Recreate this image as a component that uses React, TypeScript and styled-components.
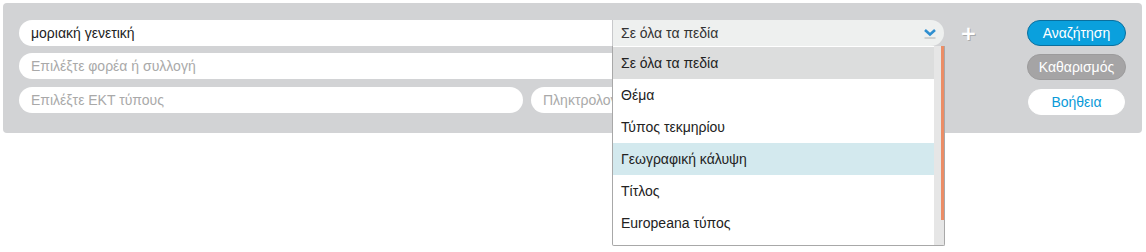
import React from 'react'
import styled, { createGlobalStyle, css } from 'styled-components'

const GlobalStyle = createGlobalStyle`
  html, body {
    margin: 0;
    min-height: 100%;
    background: #ffffff;
    font-family: 'Liberation Sans', Arial, sans-serif;
  }
`

const Page = styled.div`
  padding: 3px;
  min-height: 100vh;
  box-sizing: border-box;
`

const Panel = styled.div`
  width: 1139px;
  height: 130px;
  box-sizing: border-box;
  padding: 17px 16px 0 16px;
  background: #d2d3d5;
  border-radius: 4px;
  display: flex;
  flex-flow: row nowrap;
  align-items: flex-start;
`

const Fields = styled.div`
  width: 925px;
  display: flex;
  flex-flow: column nowrap;
  gap: 7px;
`

const FieldRow = styled.div`
  display: flex;
  flex-flow: row nowrap;
  gap: 8px;
  height: 26px;
  &:last-child {
    margin-top: 1px;
  }
`

const Input = styled.div<{ width?: number; $muted?: boolean; joined?: boolean }>`
  box-sizing: border-box;
  height: 26px;
  flex: ${({ width }) => (width ? `0 0 ${width}px` : '1 1 auto')};
  background: #ffffff;
  border-radius: 13px;
  padding-left: 12px;
  font-size: 14px;
  line-height: 26px;
  color: ${({ $muted }) => ($muted ? '#a9a9a9' : '#222222')};
  white-space: nowrap;
  overflow: hidden;
  ${({ joined }) =>
    joined &&
    css`
      border-radius: 13px 0 0 13px;
    `};
`

const JoinedRow = styled.div`
  display: flex;
  flex-flow: row nowrap;
  height: 26px;
`

const SelectWrap = styled.div`
  position: relative;
  flex: 0 0 332px;
`

const Select = styled.div`
  box-sizing: border-box;
  height: 26px;
  background: #eef0ef;
  border-radius: 0 13px 13px 0;
  border-left: 1px solid #c8c9cb;
  padding-left: 8px;
  font-size: 14px;
  line-height: 27px;
  color: #333333;
  display: flex;
  align-items: center;
  justify-content: space-between;
  padding-right: 7px;
`

const Chevron = styled.svg`
  width: 14px;
  height: 14px;
  margin-top: 1px;
`

const Dropdown = styled.div`
  position: absolute;
  top: 26px;
  left: 0;
  width: 333px;
  height: 200px;
  box-sizing: border-box;
  background: #ffffff;
  border: 1px solid #a8a8a8;
  border-top: none;
  border-radius: 0 0 2px 2px;
  display: flex;
  flex-flow: row nowrap;
  z-index: 5;
`

const OptionList = styled.div`
  flex: 1 1 auto;
  display: flex;
  flex-flow: column nowrap;
  padding-top: 1px;
`

const Option = styled.div<{ tone?: 'selected' | 'hover' }>`
  height: 32px;
  line-height: 32px;
  padding-left: 8px;
  font-size: 14px;
  color: #222222;
  background: ${({ tone }) =>
    tone === 'selected' ? '#dcdddd' : tone === 'hover' ? '#d3e9ee' : '#ffffff'};
`

const Scrollbar = styled.div`
  flex: 0 0 10px;
  background: #e6e6e6;
  display: flex;
  justify-content: flex-end;
`

const Thumb = styled.div`
  width: 3px;
  height: 174px;
  background: #ec8d66;
`

const PlusCell = styled.div`
  width: 83px;
  display: flex;
  justify-content: flex-start;
  padding-left: 16px;
  box-sizing: border-box;
  padding-top: 5px;
`

const Plus = styled.span`
  font-family: 'DejaVu Sans', sans-serif;
  font-size: 20px;
  font-weight: bold;
  line-height: 16px;
  color: #ffffff;
  text-shadow: 1px 1px 0 #a9abad;
`

const Buttons = styled.div`
  width: 99px;
  display: flex;
  flex-flow: column nowrap;
  gap: 8px;
`

const Button = styled.div<{ kind: 'primary' | 'muted' | 'light' }>`
  box-sizing: border-box;
  height: 26px;
  border-radius: 13px;
  font-size: 14px;
  line-height: 24px;
  text-align: center;
  ${({ kind }) =>
    kind === 'primary'
      ? css`
          background: #0aa0dd;
          border: 1px solid #0a6f9e;
          color: #ffffff;
        `
      : kind === 'muted'
      ? css`
          background: #a5a4a5;
          border: 1px solid #9c9b9c;
          color: #ffffff;
        `
      : css`
          background: #ffffff;
          border: 1px solid #ffffff;
          color: #0a9ad8;
          margin: 1px 1px 0;
        `};
`

const options = [
  'Σε όλα τα πεδία',
  'Θέμα',
  'Τύπος τεκμηρίου',
  'Γεωγραφική κάλυψη',
  'Τίτλος',
  'Europeana τύπος',
]

const App = () => {
  return (
    <Page>
      <GlobalStyle />
      <Panel>
        <Fields>
          <JoinedRow>
            <Input joined>μοριακή γενετική</Input>
            <SelectWrap>
              <Select>
                <span>Σε όλα τα πεδία</span>
                <Chevron viewBox="0 0 14 14">
                  <path d="M2 3 L7 7.5 L12 3" fill="none" stroke="#2f8fd0" strokeWidth="2.6" />
                  <line x1="1.5" y1="11" x2="12.5" y2="11" stroke="#b9bcbd" strokeWidth="1.2" />
                </Chevron>
              </Select>
              <Dropdown>
                <OptionList>
                  {options.map((o, i) => (
                    <Option key={i} tone={i === 0 ? 'selected' : i === 3 ? 'hover' : undefined}>
                      {o}
                    </Option>
                  ))}
                </OptionList>
                <Scrollbar>
                  <Thumb />
                </Scrollbar>
              </Dropdown>
            </SelectWrap>
          </JoinedRow>
          <FieldRow>
            <Input $muted>Επιλέξτε φορέα ή συλλογή</Input>
          </FieldRow>
          <FieldRow>
            <Input width={504} $muted>Επιλέξτε ΕΚΤ τύπους</Input>
            <Input $muted>Πληκτρολογ</Input>
          </FieldRow>
        </Fields>
        <PlusCell>
          <Plus>+</Plus>
        </PlusCell>
        <Buttons>
          <Button kind="primary">Αναζήτηση</Button>
          <Button kind="muted">Καθαρισμός</Button>
          <Button kind="light">Βοήθεια</Button>
        </Buttons>
      </Panel>
    </Page>
  )
}

export default App
